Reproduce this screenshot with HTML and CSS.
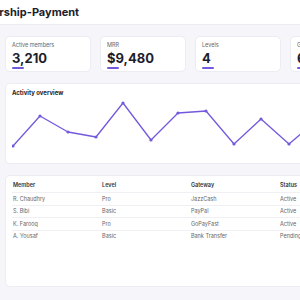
FILE: index.html
```html
<!DOCTYPE html>
<html>
<head>
    <title>Membership-Payment</title>
    <link rel="stylesheet" href="styles.css">
</head>
<body>
    <div class="topbar">
        <h1 class="title">Membership-Payment</h1>
    </div>
    <div class="main">
        <div class="stats">
            <div class="stat">
                <div class="stat-label">Active members</div>
                <div class="stat-value">3,210</div>
                <div class="stat-bar"></div>
            </div>
            <div class="stat">
                <div class="stat-label">MRR</div>
                <div class="stat-value">$9,480</div>
                <div class="stat-bar"></div>
            </div>
            <div class="stat">
                <div class="stat-label">Levels</div>
                <div class="stat-value">4</div>
                <div class="stat-bar"></div>
            </div>
            <div class="stat">
                <div class="stat-label">Gateways</div>
                <div class="stat-value">6</div>
                <div class="stat-bar"></div>
            </div>
        </div>

        <div class="card chart-card">
            <div class="card-title">Activity overview</div>
            <svg class="chart" width="360" height="58" viewBox="0 0 360 58">
                <polyline fill="none" stroke="#7459dc" stroke-width="1.3" stroke-linejoin="round"
                    points="1,46 28,16 56,32 84,37 111,3 139,40 166,13 194,11 222,44 249,19 277,44 305,20 333,40"/>
                <g fill="#7459dc">
                    <circle cx="1" cy="46" r="1.6"/>
                    <circle cx="28" cy="16" r="1.6"/>
                    <circle cx="56" cy="32" r="1.6"/>
                    <circle cx="84" cy="37" r="1.6"/>
                    <circle cx="111" cy="3" r="1.6"/>
                    <circle cx="139" cy="40" r="1.6"/>
                    <circle cx="166" cy="13" r="1.6"/>
                    <circle cx="194" cy="11" r="1.6"/>
                    <circle cx="222" cy="44" r="1.6"/>
                    <circle cx="249" cy="19" r="1.6"/>
                    <circle cx="277" cy="44" r="1.6"/>
                    <circle cx="305" cy="20" r="1.6"/>
                    <circle cx="333" cy="40" r="1.6"/>
                </g>
            </svg>
        </div>

        <div class="card table-card">
            <table class="members">
                <thead>
                    <tr><th>Member</th><th>Level</th><th>Gateway</th><th>Status</th></tr>
                </thead>
                <tbody>
                    <tr><td>R. Chaudhry</td><td>Pro</td><td>JazzCash</td><td>Active</td></tr>
                    <tr><td>S. Bibi</td><td>Basic</td><td>PayPal</td><td>Active</td></tr>
                    <tr><td>K. Farooq</td><td>Pro</td><td>GoPayFast</td><td>Active</td></tr>
                    <tr><td>A. Yousaf</td><td>Basic</td><td>Bank Transfer</td><td>Pending</td></tr>
                </tbody>
            </table>
        </div>
    </div>
</body>
</html>
```

FILE: styles.css
```css
/* Page */
html, body {
    overflow: hidden;
}

body {
    margin: 0;
    background-color: #f5f5fa;
    font-family: Inter, "Noto Sans", sans-serif;
    color: #222;
}

/* Top bar */
.topbar {
    height: 24px;
    background-color: #fff;
    border-bottom: 1px solid #ececf2;
    display: flex;
    align-items: center;
}

.title {
    margin: 0 0 0 -41px;
    font-size: 11px;
    font-weight: 700;
    color: #1d1d2b;
    white-space: nowrap;
}

/* Main area */
.main {
    width: 390px;
    padding: 11px 5px;
    display: flex;
    flex-direction: column;
    gap: 11px;
}

/* Stat cards */
.stats {
    display: flex;
    gap: 9px;
}

.stat {
    flex: 0 0 86px;
    height: 36px;
    box-sizing: border-box;
    padding: 4px 6px 0;
    background-color: #fff;
    border: 1px solid #ececf3;
    border-radius: 5px;
}

.stat-label {
    font-size: 5.5px;
    color: #666;
    line-height: 8px;
}

.stat-value {
    font-size: 13px;
    font-weight: 700;
    line-height: 15px;
    margin-top: 2px;
    color: #1d1d2b;
}

.stat-bar {
    width: 12px;
    height: 2px;
    margin-top: 1px;
    border-radius: 1px;
    background-color: #7459dc;
}

/* Generic card */
.card {
    background-color: #fff;
    border: 1px solid #ececf3;
    border-radius: 5px;
    box-sizing: border-box;
}

.chart-card {
    height: 81px;
    padding: 4px 6px;
}

.card-title {
    font-size: 6px;
    font-weight: 700;
    line-height: 10px;
    color: #1d1d2b;
}

.chart {
    display: block;
    margin-top: 2px;
}

/* Members table */
.table-card {
    height: 112px;
    padding: 2px 6px;
}

.members {
    border-collapse: collapse;
    width: 356px;
    font-size: 5.5px;
}

.members th,
.members td {
    text-align: left;
    width: 89px;
    height: 11.5px;
    padding: 0 0 0 1px;
    border-bottom: 1px solid #f0f0f4;
}

.members th {
    font-weight: 600;
    color: #333;
    height: 14px;
}

.members td {
    color: #666;
}

.members tbody tr:last-child td {
    border-bottom: none;
}
```
